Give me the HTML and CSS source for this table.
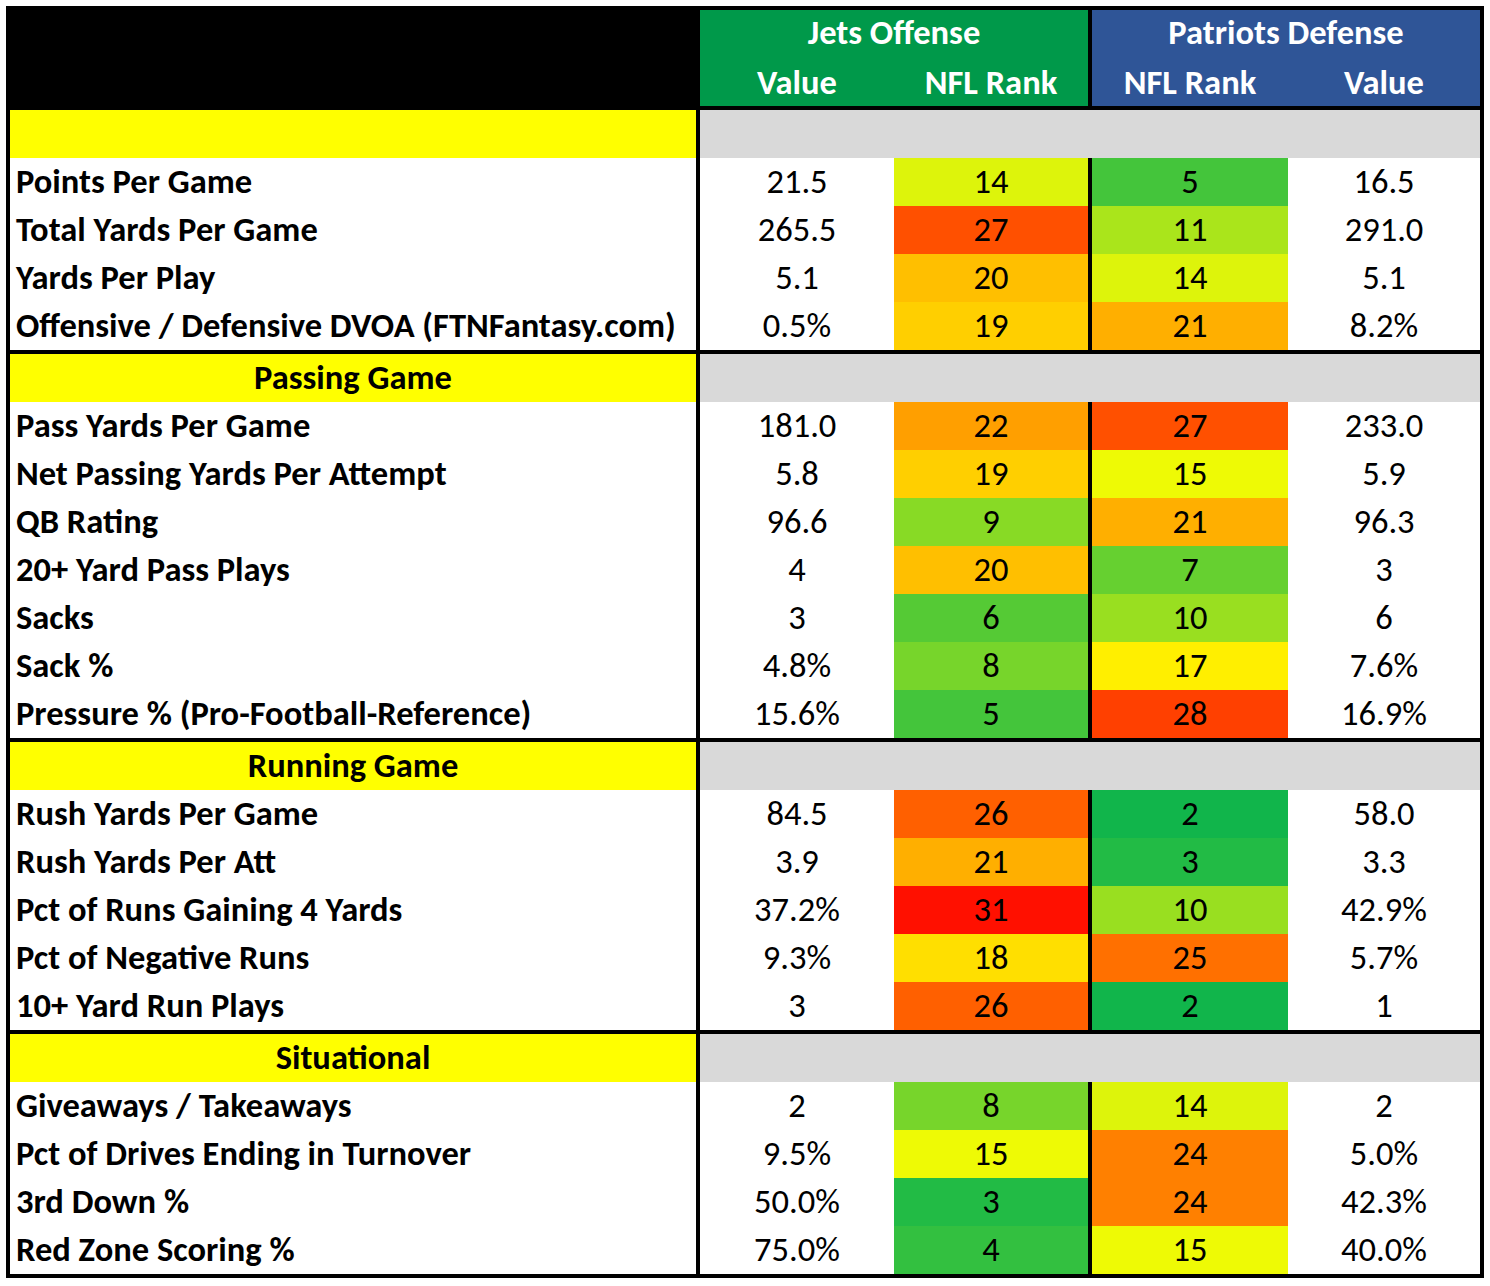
FILE: index.html
```html
<!DOCTYPE html>
<html lang="en">
<head>
<meta charset="utf-8">
<title>Jets Offense vs Patriots Defense</title>
<link rel="stylesheet" href="styles.css">
</head>
<body>
<div class="sheet">
  <div class="head">
    <div class="head-blank"></div>
    <div class="grp grp-jets">
      <div class="grp-title">Jets Offense</div>
      <div class="grp-sub"><div class="sub w-jv">Value</div><div class="sub w-jr">NFL Rank</div></div>
    </div>
    <div class="grp grp-pats">
      <div class="grp-title">Patriots Defense</div>
      <div class="grp-sub"><div class="sub w-pr">NFL Rank</div><div class="sub w-pv">Value</div></div>
    </div>
  </div>

  <div class="sec sec-first"><div class="sec-label"></div><div class="sec-fill"></div></div>
  <div class="row"><div class="lbl">Points Per Game</div><div class="val w-jv">21.5</div><div class="rank w-jr" style="background:#ddf40b">14</div><div class="rank w-pr" style="background:#44c53b">5</div><div class="val w-pv">16.5</div></div>
  <div class="row"><div class="lbl">Total Yards Per Game</div><div class="val w-jv">265.5</div><div class="rank w-jr" style="background:#ff5000">27</div><div class="rank w-pr" style="background:#aae51b">11</div><div class="val w-pv">291.0</div></div>
  <div class="row"><div class="lbl">Yards Per Play</div><div class="val w-jv">5.1</div><div class="rank w-jr" style="background:#ffbf00">20</div><div class="rank w-pr" style="background:#ddf40b">14</div><div class="val w-pv">5.1</div></div>
  <div class="row"><div class="lbl">Offensive / Defensive DVOA (FTNFantasy.com)</div><div class="val w-jv">0.5%</div><div class="rank w-jr" style="background:#ffcf00">19</div><div class="rank w-pr" style="background:#ffaf00">21</div><div class="val w-pv">8.2%</div></div>

  <div class="sec"><div class="sec-label">Passing Game</div><div class="sec-fill"></div></div>
  <div class="row"><div class="lbl">Pass Yards Per Game</div><div class="val w-jv">181.0</div><div class="rank w-jr" style="background:#ff9f00">22</div><div class="rank w-pr" style="background:#ff5000">27</div><div class="val w-pv">233.0</div></div>
  <div class="row"><div class="lbl">Net Passing Yards Per Attempt</div><div class="val w-jv">5.8</div><div class="rank w-jr" style="background:#ffcf00">19</div><div class="rank w-pr" style="background:#eefa05">15</div><div class="val w-pv">5.9</div></div>
  <div class="row"><div class="lbl">QB Rating</div><div class="val w-jv">96.6</div><div class="rank w-jr" style="background:#88da25">9</div><div class="rank w-pr" style="background:#ffaf00">21</div><div class="val w-pv">96.3</div></div>
  <div class="row"><div class="lbl">20+ Yard Pass Plays</div><div class="val w-jv">4</div><div class="rank w-jr" style="background:#ffbf00">20</div><div class="rank w-pr" style="background:#66d030">7</div><div class="val w-pv">3</div></div>
  <div class="row"><div class="lbl">Sacks</div><div class="val w-jv">3</div><div class="rank w-jr" style="background:#55ca35">6</div><div class="rank w-pr" style="background:#99df20">10</div><div class="val w-pv">6</div></div>
  <div class="row"><div class="lbl">Sack %</div><div class="val w-jv">4.8%</div><div class="rank w-jr" style="background:#77d52b">8</div><div class="rank w-pr" style="background:#ffef00">17</div><div class="val w-pv">7.6%</div></div>
  <div class="row"><div class="lbl">Pressure % (Pro-Football-Reference)</div><div class="val w-jv">15.6%</div><div class="rank w-jr" style="background:#44c53b">5</div><div class="rank w-pr" style="background:#ff4000">28</div><div class="val w-pv">16.9%</div></div>

  <div class="sec"><div class="sec-label">Running Game</div><div class="sec-fill"></div></div>
  <div class="row"><div class="lbl">Rush Yards Per Game</div><div class="val w-jv">84.5</div><div class="rank w-jr" style="background:#ff6000">26</div><div class="rank w-pr" style="background:#11b54b">2</div><div class="val w-pv">58.0</div></div>
  <div class="row"><div class="lbl">Rush Yards Per Att</div><div class="val w-jv">3.9</div><div class="rank w-jr" style="background:#ffaf00">21</div><div class="rank w-pr" style="background:#22bb45">3</div><div class="val w-pv">3.3</div></div>
  <div class="row"><div class="lbl">Pct of Runs Gaining 4 Yards</div><div class="val w-jv">37.2%</div><div class="rank w-jr" style="background:#ff1000">31</div><div class="rank w-pr" style="background:#99df20">10</div><div class="val w-pv">42.9%</div></div>
  <div class="row"><div class="lbl">Pct of Negative Runs</div><div class="val w-jv">9.3%</div><div class="rank w-jr" style="background:#ffdf00">18</div><div class="rank w-pr" style="background:#ff7000">25</div><div class="val w-pv">5.7%</div></div>
  <div class="row"><div class="lbl">10+ Yard Run Plays</div><div class="val w-jv">3</div><div class="rank w-jr" style="background:#ff6000">26</div><div class="rank w-pr" style="background:#11b54b">2</div><div class="val w-pv">1</div></div>

  <div class="sec"><div class="sec-label">Situational</div><div class="sec-fill"></div></div>
  <div class="row"><div class="lbl">Giveaways / Takeaways</div><div class="val w-jv">2</div><div class="rank w-jr" style="background:#77d52b">8</div><div class="rank w-pr" style="background:#ddf40b">14</div><div class="val w-pv">2</div></div>
  <div class="row"><div class="lbl">Pct of Drives Ending in Turnover</div><div class="val w-jv">9.5%</div><div class="rank w-jr" style="background:#eefa05">15</div><div class="rank w-pr" style="background:#ff8000">24</div><div class="val w-pv">5.0%</div></div>
  <div class="row"><div class="lbl">3rd Down %</div><div class="val w-jv">50.0%</div><div class="rank w-jr" style="background:#22bb45">3</div><div class="rank w-pr" style="background:#ff8000">24</div><div class="val w-pv">42.3%</div></div>
  <div class="row"><div class="lbl">Red Zone Scoring %</div><div class="val w-jv">75.0%</div><div class="rank w-jr" style="background:#33c040">4</div><div class="rank w-pr" style="background:#eefa05">15</div><div class="val w-pv">40.0%</div></div>
</div>
</body>
</html>
```

FILE: styles.css
```css
html, body {
  margin: 0;
  padding: 0;
  background: #ffffff;
}

body {
  font-family: Carlito, Lato, "Liberation Sans", sans-serif;
  font-size: 34.5px;
  color: #000000;
}

.sheet {
  margin: 6px;
  width: 1478px;
  box-sizing: border-box;
  border: 4px solid #000000;
  background: #ffffff;
}

/* column widths (border-box) */
.w-jv { width: 194px; }
.w-jr { width: 198px; border-right: 4px solid #000000; }
.w-pr { width: 196px; }
.w-pv { width: 192px; }

.head {
  display: flex;
  border-bottom: 4px solid #000000;
}

.head-blank {
  width: 690px;
  height: 96px;
  background: #000000;
}

.grp {
  display: flex;
  flex-direction: column;
  color: #ffffff;
  font-weight: 700;
}

.grp-jets {
  width: 392px;
  box-sizing: border-box;
  background: #00994a;
  border-right: 4px solid #000000;
}

.grp-pats {
  width: 388px;
  background: #2f5597;
}

.grp-title {
  height: 48px;
  line-height: 44px;
  text-align: center;
  white-space: nowrap;
}

.grp-sub {
  display: flex;
  height: 48px;
}

.sub {
  box-sizing: border-box;
  padding-top: 1px;
  line-height: 46px;
  text-align: center;
  white-space: nowrap;
}

.grp-sub .w-jr { width: 194px; border-right: 0; }

.sec {
  display: flex;
  height: 52px;
  border-top: 4px solid #000000;
  box-sizing: border-box;
}

.sec-first {
  height: 48px;
  border-top: 0;
}

.sec-label {
  width: 690px;
  box-sizing: border-box;
  border-right: 4px solid #000000;
  background: #ffff00;
  font-weight: 700;
  line-height: 46px;
  text-align: center;
}

.sec-fill {
  flex: 1;
  background: #d9d9d9;
}

.row {
  display: flex;
  height: 48px;
}

.lbl,
.val,
.rank {
  box-sizing: border-box;
  line-height: 46px;
  white-space: nowrap;
}

.lbl {
  width: 690px;
  border-right: 4px solid #000000;
  padding-left: 6px;
  font-weight: 700;
  overflow: hidden;
}

.val,
.rank {
  text-align: center;
}
```
